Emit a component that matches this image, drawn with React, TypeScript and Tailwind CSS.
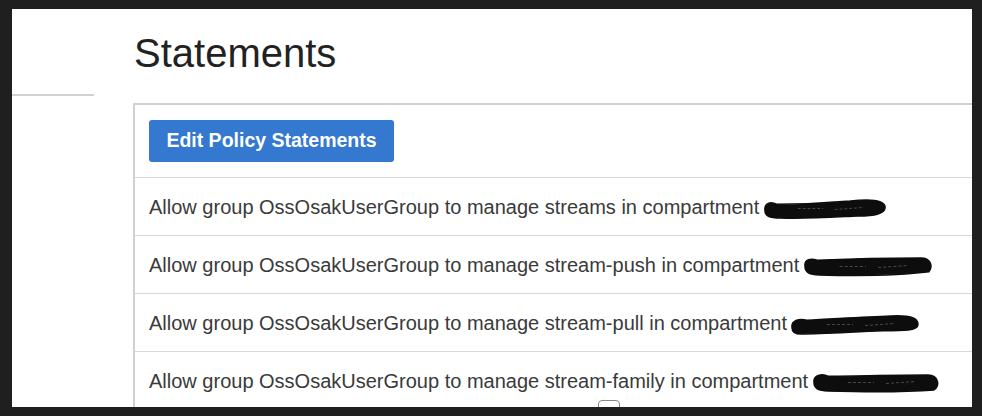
const statements = [
  { text: 'Allow group OssOsakUserGroup to manage streams in compartment', w: 124, kind: 0 },
  { text: 'Allow group OssOsakUserGroup to manage stream-push in compartment', w: 130, kind: 1 },
  { text: 'Allow group OssOsakUserGroup to manage stream-pull in compartment', w: 128, kind: 2 },
  { text: 'Allow group OssOsakUserGroup to manage stream-family in compartment', w: 128, kind: 3 },
]

// marker scribbles over the compartment names
const scribbles = [
  'M2 12 C1 5 8 3 14 6 C35 6 65 5 90 3 C108 1 124 1 126 8 C127 15 115 17 98 17 C75 18 45 20 18 19 C6 19 2 17 2 12 Z',
  'M2 10 C1 3 8 2 14 4 C40 3 80 2 116 2 C126 2 128 10 124 15 C100 18 55 19 16 18 C5 18 2 15 2 10 Z',
  'M1 13 C0 6 8 4 16 6 C40 5 70 3 100 2 C120 1 127 4 127 10 C127 16 112 16 92 16 C62 17 32 19 10 19 C3 19 1 17 1 13 Z',
  'M2 10 C1 3 10 1 16 4 C40 4 80 3 116 3 C127 3 128 14 122 17 C95 19 52 19 16 18 C5 18 2 15 2 10 Z',
]

function Redact({ w, kind }: { w: number; kind: number }) {
  return (
    <svg width={w} height="21" viewBox="0 0 128 20" preserveAspectRatio="none" className="ml-[4px] mt-[4px] shrink-0">
      <path d={scribbles[kind]} fill="#0d0d0d" stroke="#0d0d0d" strokeWidth="1.5" strokeLinejoin="round" />
      <path d="M36 10 L62 10 M74 11 L104 9" stroke="#555" strokeWidth="0.8" strokeDasharray="3 2" />
    </svg>
  )
}

export default function App() {
  return (
    <div className="w-[982px] h-[416px] bg-[#1f1f1f] pt-[9px] pl-[12px] overflow-hidden" style={{ fontFamily: '"Liberation Sans", Arial, sans-serif' }}>
      <div className="w-[960px] h-[398px] bg-white flex overflow-hidden">
        {/* sidebar stub */}
        <div className="w-[121px] shrink-0 pt-[85px]">
          <div className="w-[82px] h-[2px] bg-[#cfd1d4]" />
        </div>

        <div className="flex-1 flex flex-col">
          <h1 className="pl-px pt-[24px] text-[40px] leading-[40px] text-[#222] font-normal">Statements</h1>

          <div className="mt-[30px] border-l-2 border-t-2 border-[#cdd0d4]">
            <div className="pl-[14px] pt-[15px] pb-[15px] border-b border-[#d6d9dc]">
              <button className="w-[245px] h-[42px] rounded-[3px] bg-[#3478cf] text-white font-bold text-[19.5px] flex items-center justify-center">
                Edit Policy Statements
              </button>
            </div>

            {statements.map((s, i) => (
              <div key={i} className="relative h-[58px] pl-[14px] flex items-center border-b border-[#d6d9dc] text-[20px] text-[#3a3a3a] whitespace-nowrap">
                <span>{s.text}</span>
                <Redact w={s.w} kind={s.kind} />
                {i === statements.length - 1 && (
                  <div className="absolute left-[463px] top-[48px] w-[22px] h-[22px] rounded-[4px] border-[1.5px] border-[#8a8a8a] bg-white" />
                )}
              </div>
            ))}
          </div>
        </div>
      </div>
    </div>
  )
}
